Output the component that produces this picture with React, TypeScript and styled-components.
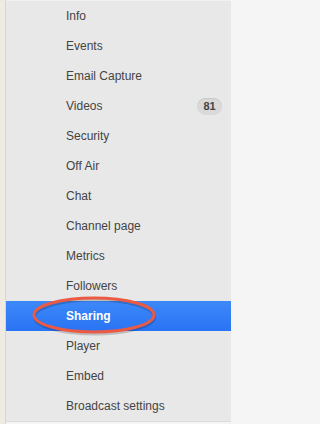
import React from 'react';
import styled, { createGlobalStyle } from 'styled-components';

const GlobalStyle = createGlobalStyle`
  html, body {
    margin: 0;
    padding: 0;
    background: #f5f5f5;
  }
  body {
    font-family: "Liberation Sans", Arial, Helvetica, sans-serif;
  }
`;

const Page = styled.div`
  display: flex;
  width: 231px;
  height: 424px;
  overflow: hidden;
`;

const Gutter = styled.div`
  width: 5px;
  flex: none;
  background: #efebe3;
  border-right: 1px solid #dad6ce;
`;

const Sidebar = styled.div`
  flex: 1;
  display: flex;
  flex-direction: column;
`;

const Menu = styled.ul`
  list-style: none;
  margin: 0;
  padding: 0;
  background: #e8e8e8;
  border-top: 1px solid #f0f0f0;
  border-bottom: 1px solid #dcdcdc;
`;

const Item = styled.li<{ $active?: boolean }>`
  position: relative;
  display: flex;
  align-items: center;
  height: 30px;
  padding: 0 9px 0 60px;
  font-size: 12px;
  color: ${({ $active }) => ($active ? '#ffffff' : '#444444')};
  font-weight: ${({ $active }) => ($active ? 'bold' : 'normal')};
  background: ${({ $active }) =>
    $active ? 'linear-gradient(#3d88f8, #2a74f4)' : 'transparent'};
`;

const Label = styled.span`
  flex: 1;
  position: relative;
  z-index: 1;
`;

const Badge = styled.span`
  display: inline-flex;
  align-items: center;
  justify-content: center;
  width: 25px;
  height: 17px;
  border-radius: 9px;
  background: #d9d9d9;
  box-shadow: inset 0 1px 1px rgba(0, 0, 0, 0.08);
  color: #444;
  font-size: 11px;
  font-weight: bold;
`;

const Ring = styled.svg`
  position: absolute;
  left: 21px;
  top: -7px;
  width: 134px;
  height: 42px;
  pointer-events: none;
  overflow: visible;
`;

const Footer = styled.div`
  flex: 1;
  background: #f5f5f5;
`;

const items = [
  'Info',
  'Events',
  'Email Capture',
  'Videos',
  'Security',
  'Off Air',
  'Chat',
  'Channel page',
  'Metrics',
  'Followers',
  'Sharing',
  'Player',
  'Embed',
  'Broadcast settings',
];

const badges: Record<string, string> = { Videos: '81' };

export default function App() {
  return (
    <>
      <GlobalStyle />
      <Page>
        <Gutter />
        <Sidebar>
          <Menu>
            {items.map((name) => {
              const active = name === 'Sharing';
              return (
                <Item key={name} $active={active}>
                  <Label>{name}</Label>
                  {badges[name] && <Badge>{badges[name]}</Badge>}
                  {active && (
                    <Ring viewBox="0 0 134 42">
                      <ellipse
                        cx="67"
                        cy="21.5"
                        rx="60"
                        ry="17"
                        fill="none"
                        stroke="rgba(0,0,0,0.18)"
                        strokeWidth="3"
                        transform="translate(0.5 1.5)"
                      />
                      <ellipse
                        cx="67"
                        cy="21"
                        rx="60"
                        ry="17"
                        fill="none"
                        stroke="#ea5a44"
                        strokeWidth="3"
                      />
                    </Ring>
                  )}
                </Item>
              );
            })}
          </Menu>
          <Footer />
        </Sidebar>
      </Page>
    </>
  );
}
